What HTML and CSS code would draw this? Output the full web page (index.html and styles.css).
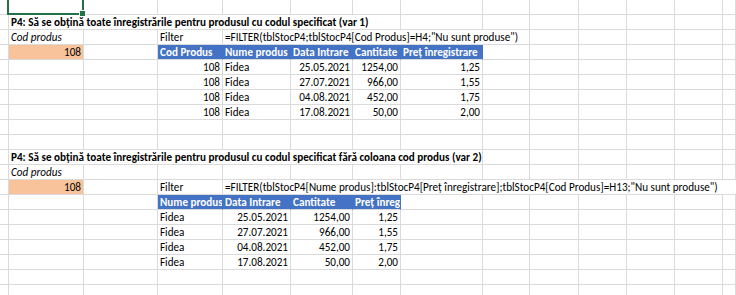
FILE: index.html
```html
<!DOCTYPE html>
<html lang="ro">
<head>
<meta charset="utf-8">
<title>P4 FILTER</title>
<link rel="stylesheet" href="styles.css">
</head>
<body>
<div class="sheet">
  <div class="selection"><span class="handle"></span></div>

  <div class="row"><div class="c"></div><div class="c"></div><div class="c"></div><div class="c"></div><div class="c"></div><div class="c"></div><div class="c"></div><div class="c"></div><div class="c"></div><div class="c"></div><div class="c"></div><div class="c"></div><div class="c"></div><div class="c"></div></div>

  <div class="row"><div class="c"></div><div class="c b title1">P4: Să se obțină toate înregistrările pentru produsul cu codul specificat (var 1)</div><div class="c"></div><div class="c"></div><div class="c"></div><div class="c"></div><div class="c"></div><div class="c"></div><div class="c"></div></div>

  <div class="row"><div class="c"></div><div class="c i">Cod produs</div><div class="c"></div><div class="c">Filter</div><div class="c f1">=FILTER(tblStocP4;tblStocP4[Cod Produs]=H4;"Nu sunt produse")</div><div class="c"></div><div class="c"></div><div class="c"></div><div class="c"></div><div class="c"></div></div>

  <div class="row"><div class="c"></div><div class="c r input">108</div><div class="c"></div><div class="c hd">Cod Produs</div><div class="c hd">Nume produs</div><div class="c hd">Data Intrare</div><div class="c hd">Cantitate</div><div class="c hd">Preț înregistrare</div><div class="c"></div><div class="c"></div><div class="c"></div><div class="c"></div><div class="c"></div><div class="c"></div></div>

  <div class="row"><div class="c"></div><div class="c"></div><div class="c"></div><div class="c r">108</div><div class="c">Fidea</div><div class="c r">25.05.2021</div><div class="c r">1254,00</div><div class="c r">1,25</div><div class="c"></div><div class="c"></div><div class="c"></div><div class="c"></div><div class="c"></div><div class="c"></div></div>
  <div class="row"><div class="c"></div><div class="c"></div><div class="c"></div><div class="c r">108</div><div class="c">Fidea</div><div class="c r">27.07.2021</div><div class="c r">966,00</div><div class="c r">1,55</div><div class="c"></div><div class="c"></div><div class="c"></div><div class="c"></div><div class="c"></div><div class="c"></div></div>
  <div class="row"><div class="c"></div><div class="c"></div><div class="c"></div><div class="c r">108</div><div class="c">Fidea</div><div class="c r">04.08.2021</div><div class="c r">452,00</div><div class="c r">1,75</div><div class="c"></div><div class="c"></div><div class="c"></div><div class="c"></div><div class="c"></div><div class="c"></div></div>
  <div class="row"><div class="c"></div><div class="c"></div><div class="c"></div><div class="c r">108</div><div class="c">Fidea</div><div class="c r">17.08.2021</div><div class="c r">50,00</div><div class="c r">2,00</div><div class="c"></div><div class="c"></div><div class="c"></div><div class="c"></div><div class="c"></div><div class="c"></div></div>

  <div class="row"><div class="c"></div><div class="c"></div><div class="c"></div><div class="c"></div><div class="c"></div><div class="c"></div><div class="c"></div><div class="c"></div><div class="c"></div><div class="c"></div><div class="c"></div><div class="c"></div><div class="c"></div><div class="c"></div></div>
  <div class="row"><div class="c"></div><div class="c"></div><div class="c"></div><div class="c"></div><div class="c"></div><div class="c"></div><div class="c"></div><div class="c"></div><div class="c"></div><div class="c"></div><div class="c"></div><div class="c"></div><div class="c"></div><div class="c"></div></div>

  <div class="row"><div class="c"></div><div class="c b title2">P4: Să se obțină toate înregistrările pentru produsul cu codul specificat fără coloana cod produs (var 2)</div><div class="c"></div><div class="c"></div><div class="c"></div><div class="c"></div><div class="c"></div><div class="c"></div></div>

  <div class="row"><div class="c"></div><div class="c i">Cod produs</div><div class="c"></div><div class="c"></div><div class="c"></div><div class="c"></div><div class="c"></div><div class="c"></div><div class="c"></div><div class="c"></div><div class="c"></div><div class="c"></div><div class="c"></div><div class="c"></div></div>

  <div class="row"><div class="c"></div><div class="c r input">108</div><div class="c"></div><div class="c">Filter</div><div class="c f2">=FILTER(tblStocP4[Nume produs]:tblStocP4[Preț înregistrare];tblStocP4[Cod Produs]=H13;"Nu sunt produse")</div></div>

  <div class="row"><div class="c"></div><div class="c"></div><div class="c"></div><div class="c hd">Nume produs</div><div class="c hd">Data Intrare</div><div class="c hd">Cantitate</div><div class="c hd">Preț înregistrare</div><div class="c"></div><div class="c"></div><div class="c"></div><div class="c"></div><div class="c"></div><div class="c"></div><div class="c"></div></div>

  <div class="row"><div class="c"></div><div class="c"></div><div class="c"></div><div class="c">Fidea</div><div class="c r">25.05.2021</div><div class="c r">1254,00</div><div class="c r">1,25</div><div class="c"></div><div class="c"></div><div class="c"></div><div class="c"></div><div class="c"></div><div class="c"></div><div class="c"></div></div>
  <div class="row"><div class="c"></div><div class="c"></div><div class="c"></div><div class="c">Fidea</div><div class="c r">27.07.2021</div><div class="c r">966,00</div><div class="c r">1,55</div><div class="c"></div><div class="c"></div><div class="c"></div><div class="c"></div><div class="c"></div><div class="c"></div><div class="c"></div></div>
  <div class="row"><div class="c"></div><div class="c"></div><div class="c"></div><div class="c">Fidea</div><div class="c r">04.08.2021</div><div class="c r">452,00</div><div class="c r">1,75</div><div class="c"></div><div class="c"></div><div class="c"></div><div class="c"></div><div class="c"></div><div class="c"></div><div class="c"></div></div>
  <div class="row"><div class="c"></div><div class="c"></div><div class="c"></div><div class="c">Fidea</div><div class="c r">17.08.2021</div><div class="c r">50,00</div><div class="c r">2,00</div><div class="c"></div><div class="c"></div><div class="c"></div><div class="c"></div><div class="c"></div><div class="c"></div><div class="c"></div></div>

  <div class="row"><div class="c"></div><div class="c"></div><div class="c"></div><div class="c"></div><div class="c"></div><div class="c"></div><div class="c"></div><div class="c"></div><div class="c"></div><div class="c"></div><div class="c"></div><div class="c"></div><div class="c"></div><div class="c"></div></div>
  <div class="row"><div class="c"></div><div class="c"></div><div class="c"></div><div class="c"></div><div class="c"></div><div class="c"></div><div class="c"></div><div class="c"></div><div class="c"></div><div class="c"></div><div class="c"></div><div class="c"></div><div class="c"></div><div class="c"></div></div>
</div>
</body>
</html>
```

FILE: styles.css
```css
html, body {
  margin: 0;
  padding: 0;
  background: #ffffff;
}

body {
  font-family: Carlito, Calibri, Lato, "Liberation Sans", sans-serif;
  font-size: 11.15px;
  color: #000000;
  overflow: hidden;
}

.sheet {
  position: relative;
  width: 736px;
  height: 295px;
  overflow: hidden;
}

.row {
  display: grid;
  grid-template-columns: 9px 75px 74px 65px 68px 62px 48px 82px 47px 49px 48px 48px 48px 1fr;
  height: 15px;
}

.c {
  box-sizing: border-box;
  height: 15px;
  border-right: 1px solid #dadada;
  border-bottom: 1px solid #dadada;
  padding: 0 2px;
  line-height: 15px;
  white-space: nowrap;
  overflow: hidden;
}

.r { text-align: right; }
.b { font-weight: bold; }
.i { font-style: italic; }

.title1 { grid-column: 2 / 8; overflow: visible; }
.title2 { grid-column: 2 / 9; overflow: visible; }
.f1 { grid-column: 5 / 10; overflow: visible; }
.f2 { grid-column: 5 / 15; border-right: none; }

.input {
  background: #f8c39a;
}

.hd {
  background: #4472c4;
  border-right-color: #4472c4;
  color: #ffffff;
  font-weight: bold;
}

.selection {
  position: absolute;
  left: 7px;
  top: -2px;
  width: 77px;
  height: 17px;
  box-sizing: border-box;
  border: 2px solid #217346;
  z-index: 2;
}

.handle {
  position: absolute;
  right: -4px;
  bottom: -4px;
  width: 5px;
  height: 5px;
  background: #217346;
  border: 1px solid #ffffff;
}
```
